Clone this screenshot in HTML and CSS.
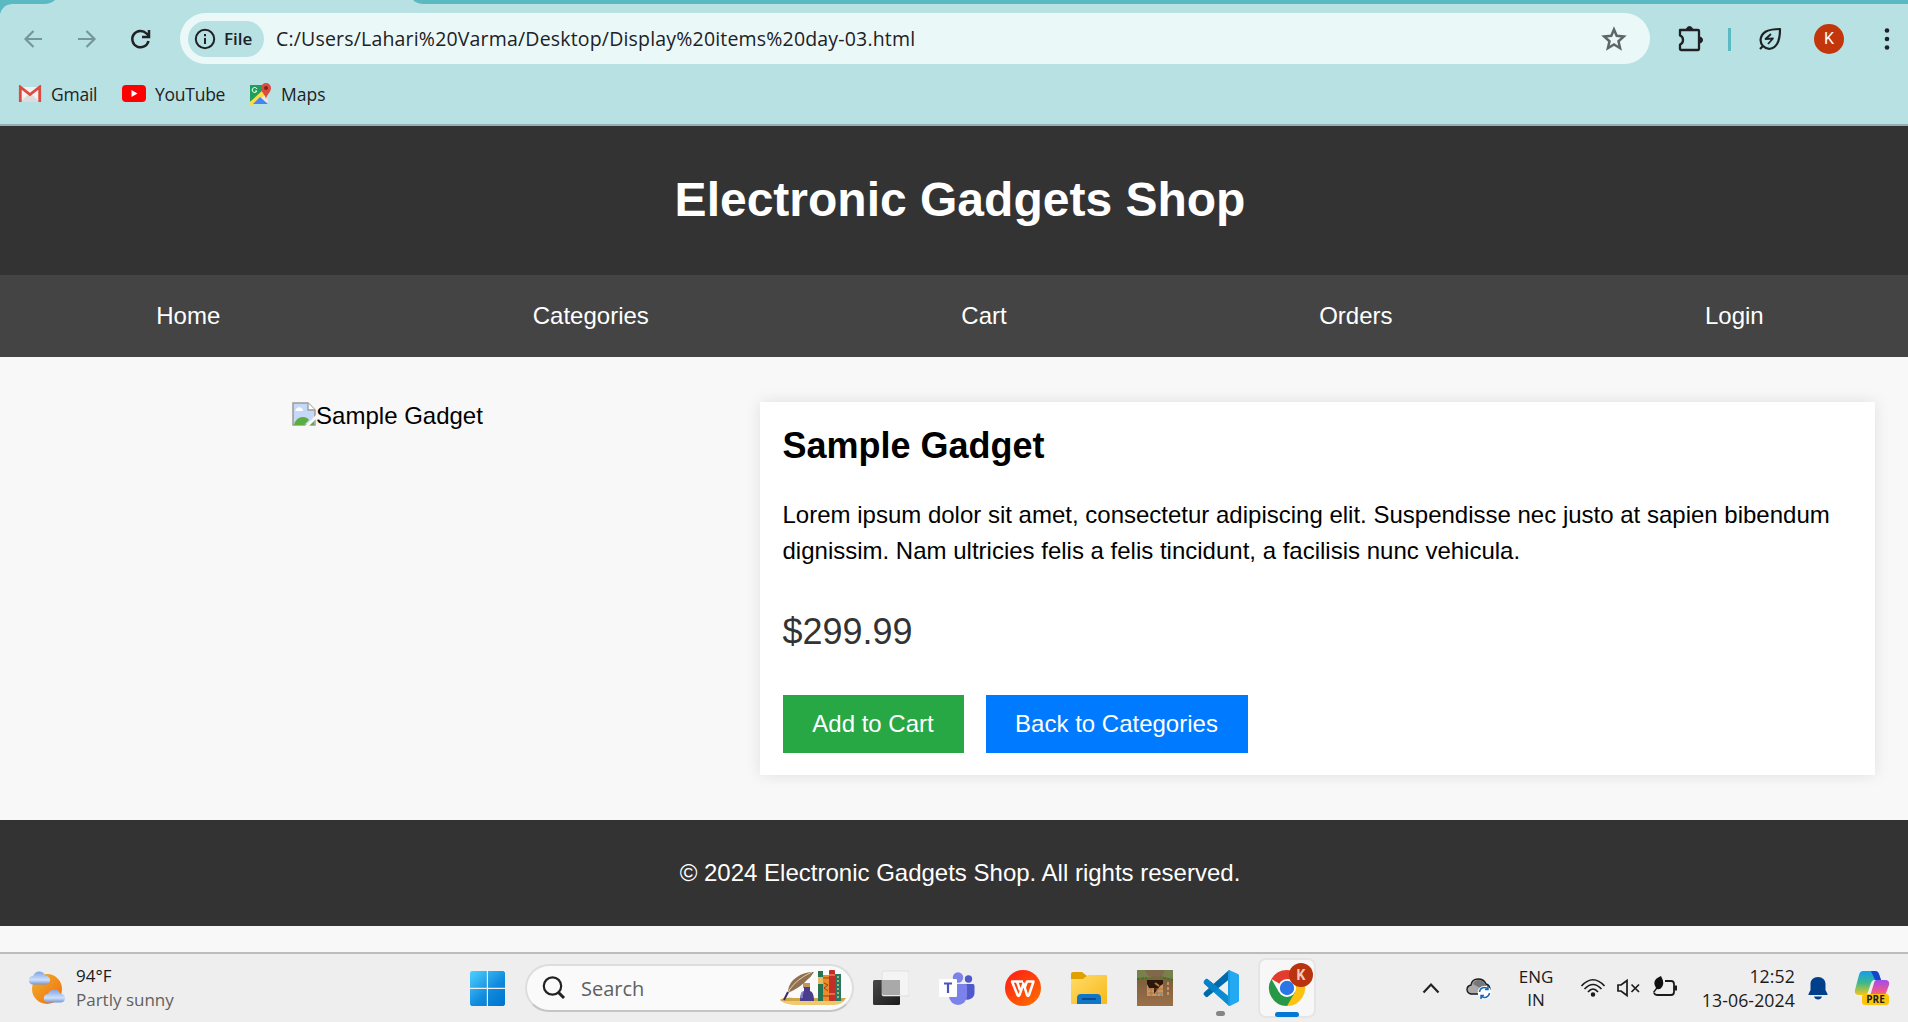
FILE: index.html
```html
<!DOCTYPE html>
<html lang="en">
<head>
<meta charset="utf-8">
<title>Electronic Gadgets Shop</title>
<link rel="stylesheet" href="styles.css">
</head>
<body>
<div class="browser">
  <svg class="tabstrip" width="1908" height="14" viewBox="0 0 1908 14"><path fill="#5ab9c1" d="M0 0H55Q51 4 44 4H12Q3 4 0 14ZM413 0H1908V4H424Q417 4 413 0Z"/></svg>
  <div class="toolbar">
    <svg class="nav-ico" width="60" height="36" viewBox="0 0 60 36" fill="none" stroke="#75969a" stroke-width="2.2"><path d="M42 18H26M33.500 10L25.500 18L33.500 26"/></svg>
    <svg class="nav-ico" width="54" height="36" viewBox="0 0 54 36" fill="none" stroke="#75969a" stroke-width="2.200"><path d="M18 18H35M26.500 10L34.500 18L26.500 26"/></svg>
    <svg class="nav-ico reload" width="54" height="36" viewBox="0 0 54 36" fill="none" stroke="#202124" stroke-width="2.500"><path d="M34.500 20A8.200 8.200 0 1 1 32.500 12.500L35 15"/><path d="M35 9V16H28"/></svg>
    <div class="address">
      <div class="chip"><svg width="22" height="22" viewBox="0 0 22 22" fill="none" stroke="#202124" stroke-width="2"><circle cx="11" cy="11" r="9.200"/><path d="M11 10V16M11 6V8.300"/></svg><span>File</span></div>
      <span class="url">C:/Users/Lahari%20Varma/Desktop/Display%20items%20day-03.html</span>
      <svg class="star" width="26" height="26" viewBox="0 0 26 26" fill="none" stroke="#5f6668" stroke-width="2.500"><path d="M13 3.500L15.700 9.800L22.800 10.500L17.500 15.200L19.100 22.200L13 18.400L6.900 22.200L8.500 15.200L3.200 10.500L10.300 9.800Z"/></svg>
    </div>
    <div class="actions">
      <svg width="82" height="36" viewBox="0 0 82 36"><path d="M30 9H48Q49 9 49 10V28Q49 29 48 29H31Q30 29 30 28V23.500Q33 22.500 33 19T30 14.500Z" fill="none" stroke="#202124" stroke-width="2.300" stroke-linejoin="round"/><path d="M36.500 8Q37 5.500 39.500 5.500T42.500 8ZM50 16Q52.500 16.500 52.500 19T50 22Z" fill="#202124" stroke="#202124"/><path d="M79.500 7V30" stroke="#5ab9c1" stroke-width="3"/></svg>
      <svg class="leaf" width="24" height="24" viewBox="0 0 24 24" fill="none" stroke="#202124" stroke-width="2.200" stroke-linejoin="round"><path d="M2 22L5 19C1 15 2 8 8 4.500Q13 2 22 2Q22 12 19 17C15 23 9 23 5 19"/><path d="M13 7L7.500 12L15 11.500L10 17" stroke-width="1.800"/></svg>
      <span class="avatar">K</span>
      <svg class="more" width="6" height="24" viewBox="0 0 6 24" fill="#202124"><circle cx="3" cy="3.500" r="2.300"/><circle cx="3" cy="12" r="2.300"/><circle cx="3" cy="20.500" r="2.300"/></svg>
    </div>
  </div>
  <div class="bookmarks">
    <svg width="24" height="18" viewBox="0 0 24 18"><path d="M2 2H22V17H2Z" fill="#f1f1f1"/><path d="M2 17L12 8L22 17Z" fill="#dcdcdc"/><path d="M2.300 17V2L12 9.500L21.700 2V17" fill="none" stroke="#dc4b3e" stroke-width="2.800"/></svg>
    <span class="bm-gmail">Gmail</span>
    <svg width="24" height="18" viewBox="0 0 24 18"><rect width="24" height="17" rx="4" fill="#f00"/><path d="M9.500 5L15.500 8.500L9.500 12Z" fill="#fff"/></svg>
    <span class="bm-youtube">YouTube</span>
    <svg width="22" height="24" viewBox="0 0 22 24"><path d="M1 3H14L18 13L19 22H1Z" fill="#e8e8e8"/><path d="M1 3H14V11L1 20Z" fill="#1ea05a"/><path d="M1 20L14 8L17 12L4 23H1Z" fill="#fddb46"/><path d="M4 22L11 15L19 22Z" fill="#4285f4"/><path d="M8 7A2.500 2.500 0 1 0 8 9H6" fill="none" stroke="#fff"/><path d="M17 1A5 5 0 0 1 22 6C22 10 18 12 17 17C16 12 12 10 12 6A5 5 0 0 1 17 1Z" fill="#dd4b3e"/><circle cx="17" cy="6" r="2" fill="#7a2520"/></svg>
    <span class="bm-maps">Maps</span>
  </div>
</div>

<div class="page">
  <header class="site-header"><h1>Electronic Gadgets Shop</h1></header>
  <nav class="site-nav"><a>Home</a><a>Categories</a><a>Cart</a><a>Orders</a><a>Login</a></nav>
  <main class="product">
    <div class="photo">
      <svg width="24" height="24" viewBox="0 0 24 24"><path d="M1 1H16L23 8V23H1Z" fill="#c6d8f7" stroke="#9b9b9b" stroke-width="1.500"/><path d="M16 1V8H23" fill="#fff" stroke="#9b9b9b" stroke-width="1.300"/><path d="M3 9Q4 6 7 5Q11 6 11 9Z" fill="#fff"/><path d="M2 23Q4 15 11 15Q15 15 17 18L12 23ZM17 23L22 19V23Z" fill="#5aad3e"/><path d="M13 24L24 13V17L17 24Z" fill="#f8f8f8"/></svg><span>Sample Gadget</span>
    </div>
    <section class="details">
      <h2>Sample Gadget</h2>
      <p class="desc">Lorem ipsum dolor sit amet, consectetur adipiscing elit. Suspendisse nec justo at sapien bibendum dignissim. Nam ultricies felis a felis tincidunt, a facilisis nunc vehicula.</p>
      <p class="price">$299.99</p>
      <div class="buttons"><button class="btn add">Add to Cart</button><button class="btn back">Back to Categories</button></div>
    </section>
  </main>
  <footer class="site-footer">© 2024 Electronic Gadgets Shop. All rights reserved.</footer>
</div>

<div class="taskbar">
  <div class="weather">
    <svg width="37" height="36" viewBox="0 0 37 36"><defs><linearGradient id="sun" x2="1" y2="1"><stop stop-color="#eeb32d"/><stop offset="1" stop-color="#f56a0c"/></linearGradient><linearGradient id="cl" x2="0" y2="1"><stop stop-color="#7fa4e4"/><stop offset=".65" stop-color="#cfe0fa"/><stop offset="1" stop-color="#7296d8"/></linearGradient></defs><circle cx="18" cy="19" r="15" fill="url(#sun)"/><path d="M4 14.500A4.200 4.200 0 0 1 4 6Q6 1 11 1.500Q15 2 16 5.500Q21 6 21 10T17 14.500Z" fill="url(#cl)"/><path d="M4 14.500A4.200 4.200 0 0 1 4 6Q6 1 11 1.500Q15 2 16 5.500Q21 6 21 10T17 14.500Z" fill="url(#cl)" transform="translate(15 18)"/></svg>
    <div class="weather-text"><span class="temp">94°F</span><span class="sky">Partly sunny</span></div>
  </div>
  <svg class="start" width="35" height="35" viewBox="0 0 35 35"><defs><linearGradient id="win" gradientUnits="userSpaceOnUse" x1="0" y1="0" x2="32" y2="35"><stop stop-color="#4dd1ff"/><stop offset=".6" stop-color="#108add"/><stop offset="1" stop-color="#0074d0"/></linearGradient></defs><path fill="url(#win)" d="M1.500 0H16.800V16.800H0V1.500ZM18 0H33.500L35 1.500V16.800H18ZM0 18H16.800V35H1.500L0 33.500ZM18 18H35V33.500L33.500 35H18Z"/></svg>
  <div class="search">
    <svg width="24" height="24" viewBox="0 0 24 24" fill="none" stroke="#222"><circle cx="10.500" cy="10" r="8.700" stroke-width="2.200"/><path d="M16.500 16.500L22 22" stroke-width="3"/></svg>
    <span>Search</span>
    <svg class="scene" width="66" height="36" viewBox="0 0 66 36"><path d="M0 30Q4 27 14 28H66Q63 35 54 35H14Q3 34 0 30Z" fill="#edca70"/><path d="M0 30Q4 27 14 28H66L63 31H2Z" fill="#cfa546"/><path d="M8 21Q9 12 17 7Q24 2 34 2Q31 7 27 10Q21 17 8 23Z" fill="#8f7050"/><path d="M5 29L10 19Q17 9 32 2" fill="none" stroke="#e5cfae"/><path d="M4 30L8 22" stroke="#3a2a70" stroke-width="2"/><rect x="23" y="13" width="7" height="5" fill="#c4955a"/><path d="M24 17H30V21Q34 22 34 31H20Q20 22 24 21Z" fill="#4a3d8e"/><path d="M23 22Q21 24 22 28" fill="none" stroke="#8d83cc" stroke-width="2"/><rect x="38" y="1" width="5" height="30" fill="#257554"/><path d="M38 7H43V14H38Z" fill="#e5bb65"/><rect x="43" y="5" width="6" height="26" fill="#ef8a2c"/><path d="M43 8H49M43 26H49M44 13L48 15L44 18L48 21" fill="none" stroke="#8b4512"/><rect x="49" width="6" height="31" rx="1" fill="#c22f27"/><path d="M49 5H55M49 24H55" stroke="#f08060" stroke-width="1.500"/><rect x="55" y="4" width="6" height="27" fill="#2a7564"/><path d="M58 6V30" stroke="#a0b870" stroke-width="2" stroke-dasharray="2 2"/></svg>
  </div>
  <div class="apps">
    <div class="app"><svg width="36" height="36" viewBox="0 0 36 36"><defs><linearGradient id="dk" x2="1" y2="1"><stop stop-color="#484848"/><stop offset="1" stop-color="#1b1b1b"/></linearGradient></defs><rect y="10" width="27" height="25" rx="1.500" fill="url(#dk)"/><rect x="9" y="1" width="27" height="25" rx="1.500" fill="#f4f4f4"/><rect x="9" y="1" width="27" height="25" rx="1.500" fill="none" stroke="#d4d4d4" stroke-width=".6"/><path d="M9 10H27V25H10L9 24Z" fill="#a9a9a9"/></svg></div>
    <div class="app"><svg width="36" height="36" viewBox="0 0 36 36"><circle cx="29.500" cy="9" r="3.700" fill="#5059c9"/><circle cx="19" cy="7.500" r="5.200" fill="#7b83eb"/><path d="M26 14H34Q35.500 14 35.500 16V23A7 7 0 0 1 24 28Z" fill="#5059c9"/><path d="M10 14H26.500Q28 14 28 15.500V26A9 9 0 0 1 10 26Z" fill="#7b83eb"/><rect y="9" width="18" height="18" rx="1" fill="#fff"/><path d="M5 13.500H13M9 13.500V23" stroke="#4b53bc" stroke-width="2.200"/></svg></div>
    <div class="app"><svg width="36" height="36" viewBox="0 0 36 36"><defs><linearGradient id="wp" x2=".8" y2="1"><stop stop-color="#ff1818"/><stop offset="1" stop-color="#ff6b00"/></linearGradient></defs><circle cx="18" cy="18" r="18" fill="url(#wp)"/><path d="M18 11.500H7L12.500 25Q13.500 27 14.500 25L18.500 13.500L22 25Q23 27 24 25L28.500 11.500H22L19.500 18M12 11.500L15 20" fill="none" stroke="#fff" stroke-width="2.500" stroke-linejoin="round"/></svg></div>
    <div class="app"><svg width="36" height="36" viewBox="0 0 36 36"><defs><linearGradient id="fo" x2="1" y2="1"><stop stop-color="#ffdc68"/><stop offset="1" stop-color="#f8b91b"/></linearGradient></defs><path d="M0 9V4Q0 2 2 2H11L16 6V10Z" fill="#e0a000"/><path d="M0 9H12L17 5H35Q36 5 36 6V33Q36 34 35 34H1Q0 34 0 33Z" fill="url(#fo)"/><path d="M6 34V28Q6 24 10 24H26Q30 24 30 28V34Z" fill="#1176c5"/><path d="M11 29H25" stroke="#0a4c8d" stroke-width="2"/></svg></div>
    <div class="app"><svg width="36" height="36" viewBox="0 0 36 36"><defs><linearGradient id="ga" x2="0" y2="1"><stop stop-color="#68723a"/><stop offset=".35" stop-color="#82603e"/><stop offset="1" stop-color="#9a7048"/></linearGradient></defs><rect width="36" height="36" fill="url(#ga)"/><path d="M0 0H36V9L27 7L20 4L10 8L0 9Z" fill="#79804b"/><path d="M8 0H28L25 6H11Z" fill="#80694a"/><path d="M0 9L10 8M26 8L36 10" stroke="#377b20" stroke-width="2" stroke-dasharray="3 1"/><rect x="10" y="10" width="16" height="16" fill="#c99560"/><path d="M10 10H26V14L23 16L20 20L17 24V18L12 18L10 14Z" fill="#2a160c"/><path d="M18 13L22 16" stroke="#b57a3c" stroke-width="2"/><path d="M11 19H26M11 23H26M14 18V26M20 18V26" stroke="#996438" stroke-width=".6"/><path d="M31 12V26" stroke="#bd9566" stroke-width="2" stroke-dasharray="3 2"/><rect x="23" y="24" width="2" height="2" fill="#42a2d8"/></svg></div>
    <div class="app"><svg width="36" height="36" viewBox="0 0 36 36"><path d="M1 11L3 9Q4 8.500 5 9.500L29 29L26 36L1 13.500Q0 12 1 11Z" fill="#0c8bd3"/><path d="M1 25L3 27Q4 27.500 5 26.500L29 7L26 0L1 22.500Q0 24 1 25Z" fill="#0069ac"/><path d="M1 11L3 9Q4 8.500 5 9.500L16 18L10 22L1 13.500Z" fill="#0782c8"/><path d="M26 0L35 4L36 5V31L35 32L27 36Z" fill="#23a9f2"/><path d="M25 35L27 36V0L25 1Z" fill="#1b9ae4"/></svg><i class="mark"></i></div>
    <div class="app active"><svg width="46" height="44" viewBox="0 0 46 44"><g transform="translate(1 7)"><path d="M18 18L2.400 9A18 18 0 0 1 33.600 9Z" fill="#e33b2e"/><path d="M18 18L33.600 9A18 18 0 0 1 18 36Z" fill="#fdc20f"/><path d="M18 18V36A18 18 0 0 1 2.400 9L10.200 22.500Z" fill="#279847"/><path d="M18 36L25.800 22.500L18 18L12 26Z" fill="#279847"/><path d="M18 9H33.600V13H25Z" fill="#fdc20f"/><circle cx="18" cy="18" r="9" fill="#fff"/><circle cx="18" cy="18" r="7.200" fill="#2b76e6"/></g></svg><b class="badge">K</b><i class="mark on"></i></div>
  </div>
  <div class="tray">
    <svg width="18" height="12" viewBox="0 0 18 12"><path d="M1.500 10.500L9 2.500L16.500 10.500" fill="none" stroke="#222" stroke-width="2.200"/></svg>
    <svg width="26" height="24" viewBox="0 0 26 24"><path d="M5 18Q1 17 1 13.500Q1 10 5 9Q6 3 12 3Q18 3 20 8Q24 9 24 14T19 18Z" fill="#aaa" stroke="#1b1b1b" stroke-width="1.400"/><path d="M7 8Q10 2 16 5Q19 7 20 10L14 12Z" fill="#777"/><circle cx="18.500" cy="16.500" r="6.800" fill="#fff"/><path d="M13.500 16A5 5 0 0 1 22 13M23.500 17A5 5 0 0 1 15 20M22 10V13.500H19M15 23V19.500H18" fill="none" stroke="#1069bd" stroke-width="1.500"/></svg>
    <div class="lang"><span>ENG</span><span>IN</span></div>
    <svg width="26" height="20" viewBox="0 0 26 20" fill="none" stroke="#1b1b1b" stroke-width="1.700"><path d="M1.500 8Q13-4.500 24.500 8M4.500 11Q13 2 21.500 11M8 14Q13 8 18 14"/><circle cx="13" cy="16.500" r="1.400" fill="#1b1b1b"/></svg>
    <svg width="24" height="20" viewBox="0 0 24 20" fill="none" stroke="#1b1b1b" stroke-width="1.700"><path d="M1 7V13H4L10 17.500V2.500L4 7ZM14.500 6.500L22 14M22 6.500L14.500 14"/></svg>
    <svg class="battery" width="26" height="24" viewBox="0 0 26 24"><path d="M13 6H19Q22 6 22 9V17Q22 20 19 20H5Q3 20 2 18" fill="none" stroke="#1b1b1b" stroke-width="1.800"/><path d="M22 10.500H25V15.500H22Z" fill="#1b1b1b"/><path d="M9 1Q13 8 10 12Q8 15 5 14L2 18L1 17L4 13Q-1 5 9 1Z" fill="#111"/></svg>
    <div class="clock"><span>12:52</span><span>13-06-2024</span></div>
    <svg width="20" height="24" viewBox="0 0 20 24" fill="#00408a"><path d="M10 1C14.500 1 17.500 4 17.500 8V14L19.500 18Q20 19 19 19H1Q0 19 .5 18L2.500 14V8C2.500 4 5.500 1 10 1ZM6 20.500H14Q13 23.500 10 23.500T6 20.500Z"/></svg>
    <div class="copilot"><svg width="36" height="36" viewBox="0 0 36 36"><defs><linearGradient id="ca" x2="0" y2="1"><stop stop-color="#129eed"/><stop offset=".5" stop-color="#3cb98b"/><stop offset="1" stop-color="#f5c618"/></linearGradient><linearGradient id="cb" x2="0" y2="1"><stop stop-color="#a04df0"/><stop offset=".6" stop-color="#ee5592"/><stop offset="1" stop-color="#ff8740"/></linearGradient></defs><path d="M9 1H21Q24 1 25 4L27 10H21Q18 10 17 13L14 22Q13 25 10 25H5Q0 25 1 20L5 5Q6 1 9 1Z" fill="url(#ca)"/><path d="M17 1H21Q24 1 25 4L27 10H21Z" fill="#1346ce"/><path d="M22 10H31Q36 10 35 15L32 23Q31 28 26 28H13Q16 27 17 23L20 13Q20 11 22 10Z" fill="url(#cb)"/></svg><b>PRE</b></div>
  </div>
</div>
</body>
</html>
```
FILE: styles.css
```css
* { box-sizing: border-box; }
html, body { margin: 0; height: 100%; overflow: hidden; }
body { background: #f8f8f8; display: flex; flex-direction: column; width: 1908px; height: 1022px; font-family: "Open Sans", sans-serif; }
svg { display: block; flex: none; }
p, h1, h2 { margin: 0; }

.browser { height: 126px; flex: none; background: #b8e1e4; border-bottom: 2px solid #93b1b3; color: #202124; display: flex; flex-direction: column; }
.tabstrip { margin-bottom: -1px; }
.toolbar { height: 51px; flex: none; display: flex; align-items: center; }
.reload { margin-right: 12px; }
.address { width: 1470px; height: 51px; flex: none; border-radius: 26px; background: #ebf8f8; display: flex; align-items: center; padding: 0 23px 0 8px; }
.chip { width: 76px; height: 36px; border-radius: 18px; background: #b8e1e4; display: flex; align-items: center; gap: 8px; padding-left: 6px; font-size: 17px; font-weight: 600; }
.url { margin-left: 12px; font-size: 19.5px; letter-spacing: .18px; white-space: nowrap; }
.star { margin-left: auto; }
.actions { display: flex; align-items: center; }
.leaf { margin-left: 26px; }
.avatar { width: 30px; height: 30px; margin-left: 32px; border-radius: 50%; background: #c3360c; color: #fff; font: 16px/30px Roboto, sans-serif; text-align: center; }
.more { margin-left: 40px; }
.bookmarks { flex: 1; display: flex; align-items: center; padding: 0 0 1px 18px; font-size: 17.5px; letter-spacing: -.25px; white-space: nowrap; }
.bookmarks span { line-height: 24px; }
.bm-gmail { width: 71px; margin-left: 9px; }
.bm-youtube { width: 94px; margin-left: 9px; }
.bm-maps { margin-left: 10px; letter-spacing: 0; }

.page { width: 1920px; height: 826px; flex: none; font: 24px/36px "Liberation Sans", Arial, sans-serif; color: #000; }
.site-header { height: 149px; padding-bottom: 2px; background: #333; color: #fff; display: flex; align-items: center; justify-content: center; }
.site-header h1 { font-size: 48px; line-height: 72px; }
.site-nav { height: 82px; background: #444; color: #fff; display: flex; align-items: center; justify-content: space-around; }
.product { padding: 45px; display: grid; grid-template-columns: 685px 1115px; gap: 30px; height: 463px; }
.photo { display: flex; justify-content: center; align-items: flex-start; }
.photo span { line-height: 28px; }
.details { background: #fff; box-shadow: 0 0 15px rgba(0, 0, 0, .1); padding: 22px 22.5px; }
.details h2 { font-size: 36px; line-height: 44px; margin-bottom: 29px; }
.price { font-size: 36px; line-height: 54px; color: #333; margin: 36px 0; }
.buttons { display: flex; gap: 22px; }
.btn { height: 58px; padding: 0; border: 0; color: #fff; font: 24px "Liberation Sans", Arial, sans-serif; }
.add { width: 181px; background: #28a745; }
.back { width: 262px; background: #007bff; }
.site-footer { height: 106px; background: #333; color: #fff; display: flex; align-items: center; justify-content: center; }

.taskbar { height: 70px; flex: none; background: #eee; border-top: 2px solid #bcbcbc; display: flex; align-items: center; color: #1b1b1b; }
.weather { width: 470px; display: flex; align-items: center; padding-left: 29px; gap: 10px; }
.weather-text { display: flex; flex-direction: column; font-size: 17px; line-height: 24px; }
.sky { color: #606060; }
.search { width: 329px; height: 48px; margin-left: 20px; border: 2px solid #ddd; border-bottom-color: #c5c5c5; border-radius: 24px; background: #fafafa; display: flex; align-items: center; padding: 0 6px 0 15px; font-size: 20px; color: #606060; }
.search span { margin-left: 15px; }
.scene { margin-left: auto; }
.apps { display: flex; margin-left: 4px; }
.app { width: 66px; height: 68px; display: flex; align-items: center; justify-content: center; position: relative; }
.app.active { width: 58px; height: 60px; margin: 4px; background: #f7f7f7; border: 2px solid #e5e5e5; border-radius: 8px; }
.app.active svg { margin: -7px 0 0 7px; }
.mark { position: absolute; left: 28px; bottom: 6px; width: 9px; height: 5px; border-radius: 3px; background: #858585; }
.mark.on { left: 15px; bottom: -1px; width: 24px; background: #0078d4; }
.badge { position: absolute; left: 29px; top: 3px; width: 24px; height: 24px; border-radius: 50%; background: #b9330f; color: #f3c9bd; font: 700 14px/24px Roboto, sans-serif; text-align: center; }
.tray { margin-left: 88px; display: grid; grid-template-columns: 46px 49px 66px 48px 24px 48px 106px 46px 62px; align-items: center; justify-items: center; font-size: 17px; line-height: 24px; }
.lang { text-align: center; display: flex; flex-direction: column; line-height: 23px; }
.battery { margin-top: -2px; }
.clock { justify-self: end; display: flex; flex-direction: column; text-align: right; white-space: nowrap; font-size: 17.7px; letter-spacing: .1px; }
.copilot { position: relative; }
.copilot b { position: absolute; left: 8px; bottom: 1px; width: 27px; height: 11px; border-radius: 3px; background: #ffc40a; color: #1b1b1b; font-size: 10px; line-height: 11px; text-align: center; }
```
